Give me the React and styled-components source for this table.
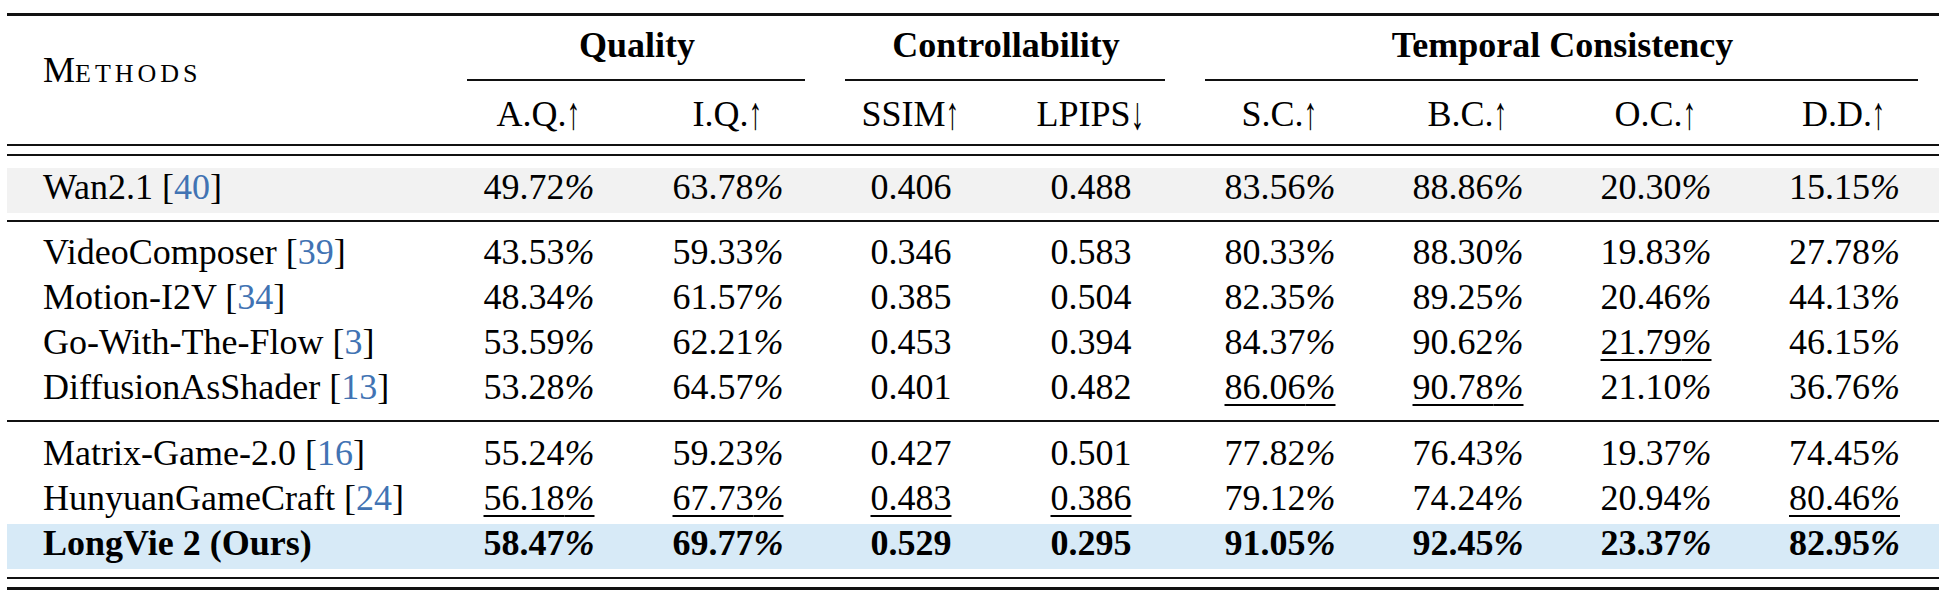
import React from "react";
import styled, { createGlobalStyle } from "styled-components";

const GlobalStyle = createGlobalStyle`
  html, body { margin: 0; padding: 0; background: #ffffff; }
  body {
    font-family: "Liberation Serif", "Times New Roman", serif;
    color: #000;
  }
`;

const COLS = "441px 182px 196px 170px 190px 188px 188px 188px 189px";

const Page = styled.div`
  padding: 13px 0 0 7px;
`;

const Table = styled.div`
  width: 1932px;
  display: flex;
  flex-direction: column;
`;

const Rule = styled.div`
  height: ${(p) => p.$h || 2}px;
  margin-top: ${(p) => p.$mt || 0}px;
  background: #111;
`;

const Header = styled.div`
  display: grid;
  grid-template-columns: ${COLS};
  grid-template-rows: 49px 16px 53px;
  font-size: 36px;
`;

const MethodsCell = styled.div`
  grid-column: 1;
  grid-row: 1 / 4;
  padding: 34px 0 0 36px;
  line-height: 40px;
  white-space: nowrap;
`;

const SmallCaps = styled.span`
  font-size: 26px;
  letter-spacing: 4px;
`;

const GroupTitle = styled.div`
  grid-row: 1;
  grid-column: ${(p) => p.$span};
  padding-top: 9px;
  line-height: 40px;
  font-weight: 700;
  text-align: center;
  white-space: nowrap;
`;

const CMidRule = styled.div`
  grid-row: 2;
  grid-column: ${(p) => p.$span};
  align-self: end;
  height: 2px;
  margin: 0 21px 0 19px;
  background: #111;
`;

const SubHead = styled.div`
  grid-row: 3;
  padding-top: 13px;
  line-height: 40px;
  text-align: center;
  white-space: nowrap;
`;

const Arrow = styled.span`
  display: inline-block;
  margin-left: -2px;
  font-family: "Liberation Serif", "DejaVu Serif", serif;
  font-size: 34px;
  line-height: 30px;
  transform: translateY(1px) scale(0.8, 1.35);
  transform-origin: 50% 70%;
`;

const Group = styled.div`
  padding: ${(p) => p.$pt}px 0 ${(p) => p.$pb}px;
`;

const Row = styled.div`
  display: grid;
  grid-template-columns: ${COLS};
  height: 45px;
  line-height: 39px;
  font-size: 36px;
  font-weight: ${(p) => (p.$bold ? 700 : 400)};
  background: ${(p) => p.$bg || "transparent"};
`;

const NameCell = styled.div`
  padding-left: 36px;
  white-space: nowrap;
`;

const Cell = styled.div`
  text-align: center;
  white-space: nowrap;
`;

const Cite = styled.span`
  color: #4173b3;
`;

const Under = styled.span`
  text-decoration: underline;
  text-decoration-thickness: 2px;
  text-underline-offset: 5px;
`;

const PctSign = styled.span`
  font-style: italic;
`;

const subHeads = [
  ["A.Q.", "↑"],
  ["I.Q.", "↑"],
  ["SSIM", "↑"],
  ["LPIPS", "↓"],
  ["S.C.", "↑"],
  ["B.C.", "↑"],
  ["O.C.", "↑"],
  ["D.D.", "↑"],
];

const groups = [
  {
    pt: 12,
    pb: 7,
    rows: [
      {
        name: "Wan2.1",
        cite: "40",
        bg: "#f2f2f2",
        vals: ["49.72%", "63.78%", "0.406", "0.488", "83.56%", "88.86%", "20.30%", "15.15%"],
        under: [],
      },
    ],
  },
  {
    pt: 11,
    pb: 7,
    rows: [
      {
        name: "VideoComposer",
        cite: "39",
        vals: ["43.53%", "59.33%", "0.346", "0.583", "80.33%", "88.30%", "19.83%", "27.78%"],
        under: [],
      },
      {
        name: "Motion-I2V",
        cite: "34",
        vals: ["48.34%", "61.57%", "0.385", "0.504", "82.35%", "89.25%", "20.46%", "44.13%"],
        under: [],
      },
      {
        name: "Go-With-The-Flow",
        cite: "3",
        vals: ["53.59%", "62.21%", "0.453", "0.394", "84.37%", "90.62%", "21.79%", "46.15%"],
        under: [6],
      },
      {
        name: "DiffusionAsShader",
        cite: "13",
        vals: ["53.28%", "64.57%", "0.401", "0.482", "86.06%", "90.78%", "21.10%", "36.76%"],
        under: [4, 5],
      },
    ],
  },
  {
    pt: 12,
    pb: 8,
    rows: [
      {
        name: "Matrix-Game-2.0",
        cite: "16",
        vals: ["55.24%", "59.23%", "0.427", "0.501", "77.82%", "76.43%", "19.37%", "74.45%"],
        under: [],
      },
      {
        name: "HunyuanGameCraft",
        cite: "24",
        vals: ["56.18%", "67.73%", "0.483", "0.386", "79.12%", "74.24%", "20.94%", "80.46%"],
        under: [0, 1, 2, 3, 7],
      },
      {
        name: "LongVie 2 (Ours)",
        bold: true,
        bg: "#d7eaf7",
        vals: ["58.47%", "69.77%", "0.529", "0.295", "91.05%", "92.45%", "23.37%", "82.95%"],
        under: [],
      },
    ],
  },
];

function Value({ v }) {
  if (v.endsWith("%")) {
    return (
      <>
        {v.slice(0, -1)}
        <PctSign>%</PctSign>
      </>
    );
  }
  return v;
}

function DataRow({ row }) {
  return (
    <Row $bg={row.bg} $bold={row.bold}>
      <NameCell>
        {row.name}
        {row.cite && (
          <>
            {" "}[<Cite>{row.cite}</Cite>]
          </>
        )}
      </NameCell>
      {row.vals.map((v, i) => (
        <Cell key={i}>
          {row.under.includes(i) ? (
            <Under>
              <Value v={v} />
            </Under>
          ) : (
            <Value v={v} />
          )}
        </Cell>
      ))}
    </Row>
  );
}

export default function App() {
  return (
    <>
      <GlobalStyle />
      <Page>
        <Table>
          <Rule $h={3} />
          <Header>
            <MethodsCell>
              M<SmallCaps>ETHODS</SmallCaps>
            </MethodsCell>
            <GroupTitle $span="2 / 4">Quality</GroupTitle>
            <GroupTitle $span="4 / 6">Controllability</GroupTitle>
            <GroupTitle $span="6 / 10">Temporal Consistency</GroupTitle>
            <CMidRule $span="2 / 4" />
            <CMidRule $span="4 / 6" />
            <CMidRule $span="6 / 10" />
            {subHeads.map(([t, a]) => (
              <SubHead key={t}>
                {t}
                <Arrow>{a}</Arrow>
              </SubHead>
            ))}
          </Header>
          <Rule $mt={10} />
          <Rule $mt={8} />
          {groups.map((g, gi) => (
            <React.Fragment key={gi}>
              <Group $pt={g.pt} $pb={g.pb}>
                {g.rows.map((r) => (
                  <DataRow key={r.name} row={r} />
                ))}
              </Group>
              {gi < groups.length - 1 && <Rule />}
            </React.Fragment>
          ))}
          <Rule />
          <Rule $h={3} $mt={8} />
        </Table>
      </Page>
    </>
  );
}
